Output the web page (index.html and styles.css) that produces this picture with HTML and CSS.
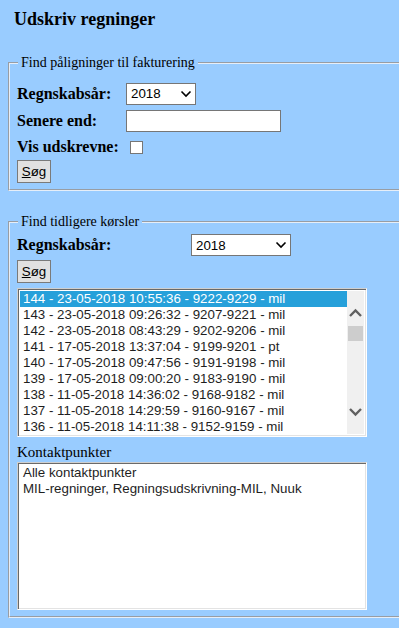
FILE: index.html
```html
<!DOCTYPE html>
<html lang="da">
  <head>
    <meta charset="UTF-8" />
    <meta name="viewport" content="width=device-width, initial-scale=1.0" />
    <title>Udskriv regninger</title>
    <link rel="stylesheet" href="styles.css">
  </head>
  <body>
    <div class="page">
      <h3 class="title">Udskriv regninger</h3>

      <fieldset class="box box-first">
        <legend>Find påligninger til fakturering</legend>
        <div class="form form-narrow">
          <label class="lbl">Regnskabsår:</label>
          <div class="dropdown dropdown-small"><span>2018</span><svg class="chev" width="12" height="8" viewBox="0 0 12 8"><path d="M1.5 1.5 L6 6 L10.5 1.5" fill="none" stroke="#000" stroke-width="1.6"/></svg></div>
          <label class="lbl">Senere end:</label>
          <input class="textfield" type="text" />
          <label class="lbl">Vis udskrevne:</label>
          <span class="check"></span>
        </div>
        <button class="btn"><u>S</u>øg</button>
      </fieldset>

      <fieldset class="box box-second">
        <legend>Find tidligere kørsler</legend>
        <div class="form form-wide">
          <label class="lbl">Regnskabsår:</label>
          <div class="dropdown dropdown-big"><span>2018</span><svg class="chev" width="12" height="8" viewBox="0 0 12 8"><path d="M1.5 1.5 L6 6 L10.5 1.5" fill="none" stroke="#000" stroke-width="1.6"/></svg></div>
        </div>
        <button class="btn btn-second"><u>S</u>øg</button>

        <div class="listbox runs">
          <div class="options">
            <div class="opt selected">144 - 23-05-2018 10:55:36 - 9222-9229 - mil</div>
            <div class="opt">143 - 23-05-2018 09:26:32 - 9207-9221 - mil</div>
            <div class="opt">142 - 23-05-2018 08:43:29 - 9202-9206 - mil</div>
            <div class="opt">141 - 17-05-2018 13:37:04 - 9199-9201 - pt</div>
            <div class="opt">140 - 17-05-2018 09:47:56 - 9191-9198 - mil</div>
            <div class="opt">139 - 17-05-2018 09:00:20 - 9183-9190 - mil</div>
            <div class="opt">138 - 11-05-2018 14:36:02 - 9168-9182 - mil</div>
            <div class="opt">137 - 11-05-2018 14:29:59 - 9160-9167 - mil</div>
            <div class="opt">136 - 11-05-2018 14:11:38 - 9152-9159 - mil</div>
          </div>
          <div class="scrollbar">
            <svg class="arrow" width="17" height="35" viewBox="0 0 17 35"><path d="M3 25 L8.5 19.5 L14 25" fill="none" stroke="#606060" stroke-width="2.4"/></svg>
            <div class="thumb"></div>
            <div class="track"></div>
            <svg class="arrow" width="17" height="35" viewBox="0 0 17 35"><path d="M3 10 L8.5 15.5 L14 10" fill="none" stroke="#606060" stroke-width="2.4"/></svg>
          </div>
        </div>

        <div class="caption">Kontaktpunkter</div>
        <div class="listbox contacts">
          <div class="options">
            <div class="opt">Alle kontaktpunkter</div>
            <div class="opt">MIL-regninger, Regningsudskrivning-MIL, Nuuk</div>
          </div>
        </div>
      </fieldset>
    </div>
  </body>
</html>
```

FILE: styles.css
```css
body {
  margin: 0;
  background-color: #99ccff;
  overflow: hidden;
  font-family: "Liberation Serif", "Times New Roman", serif;
  color: #000;
}
.page {
  padding: 0 0 0 8px;
  width: 460px;
}
.title {
  margin: 0;
  padding: 8px 0 0 6px;
  font-size: 18px;
  line-height: 22px;
  font-weight: bold;
}
.box {
  margin: 0;
  width: 430px;
  border: 2px groove #e6eef8;
  padding: 0 0 6px 7px;
}
.box legend {
  font-size: 14px;
  line-height: 16px;
  padding: 0 3px;
  margin-left: 1px;
}
.box-first {
  margin-top: 25px;
}
.box-second {
  margin-top: 23px;
}
.form {
  display: grid;
  align-items: center;
}
.form-narrow {
  grid-template-columns: 109px 1fr;
  grid-template-rows: 27px 27px 26px;
  margin-top: 9px;
}
.form-wide {
  grid-template-columns: 174px 1fr;
  grid-template-rows: 26px;
  margin-top: 2px;
}
.lbl {
  font-weight: bold;
  font-size: 16px;
}
.dropdown {
  box-sizing: border-box;
  height: 22px;
  border: 1px solid #767676;
  background: #fff;
  display: flex;
  align-items: center;
  justify-content: space-between;
  padding: 0 3px 0 4px;
  font-family: "Liberation Sans", Arial, sans-serif;
  font-size: 13.33px;
}
.dropdown-small {
  width: 70px;
}
.dropdown-big {
  width: 100px;
}
.textfield {
  box-sizing: border-box;
  width: 155px;
  height: 22px;
  margin: 0;
  border: 1px solid #767676;
  background: #fff;
  outline: none;
}
.check {
  display: block;
  width: 11px;
  height: 11px;
  margin-left: 4px;
  border: 1px solid #767676;
  background: #fff;
}
.btn {
  display: block;
  box-sizing: border-box;
  width: 34px;
  height: 23px;
  margin: 0;
  padding: 0;
  border: 1px solid #7a7a7a;
  border-radius: 0;
  background: #e1e1e1;
  font-family: "Liberation Sans", Arial, sans-serif;
  font-size: 13.33px;
  color: #000;
}
.btn-second {
  margin-top: 2px;
}
.listbox {
  box-sizing: border-box;
  width: 350px;
  display: flex;
  background: #fff;
  border: 1px solid;
  border-color: #cfcfcf #ffffff #ffffff #cfcfcf;
  box-shadow: inset 1px 1px 0 #696969, inset -1px -1px 0 #e3e3e3;
  padding: 2px;
  font-family: "Liberation Sans", Arial, sans-serif;
  font-size: 13.33px;
  color: #1e1e1e;
}
.runs {
  height: 149px;
  margin-top: 5px;
}
.contacts {
  height: 148px;
}
.options {
  flex: 1;
}
.opt {
  height: 16px;
  line-height: 16px;
  padding-left: 3px;
  white-space: nowrap;
}
.opt.selected {
  background: #26a0da;
  color: #fff;
}
.scrollbar {
  width: 17px;
  background: #f0f0f0;
  display: flex;
  flex-direction: column;
}
.arrow {
  display: block;
  flex: none;
}
.thumb {
  margin: 0 1px;
  height: 15px;
  background: #cdcdcd;
}
.track {
  flex: 1;
}
.caption {
  font-size: 15px;
  margin-top: 5px;
  line-height: 20px;
}
```
